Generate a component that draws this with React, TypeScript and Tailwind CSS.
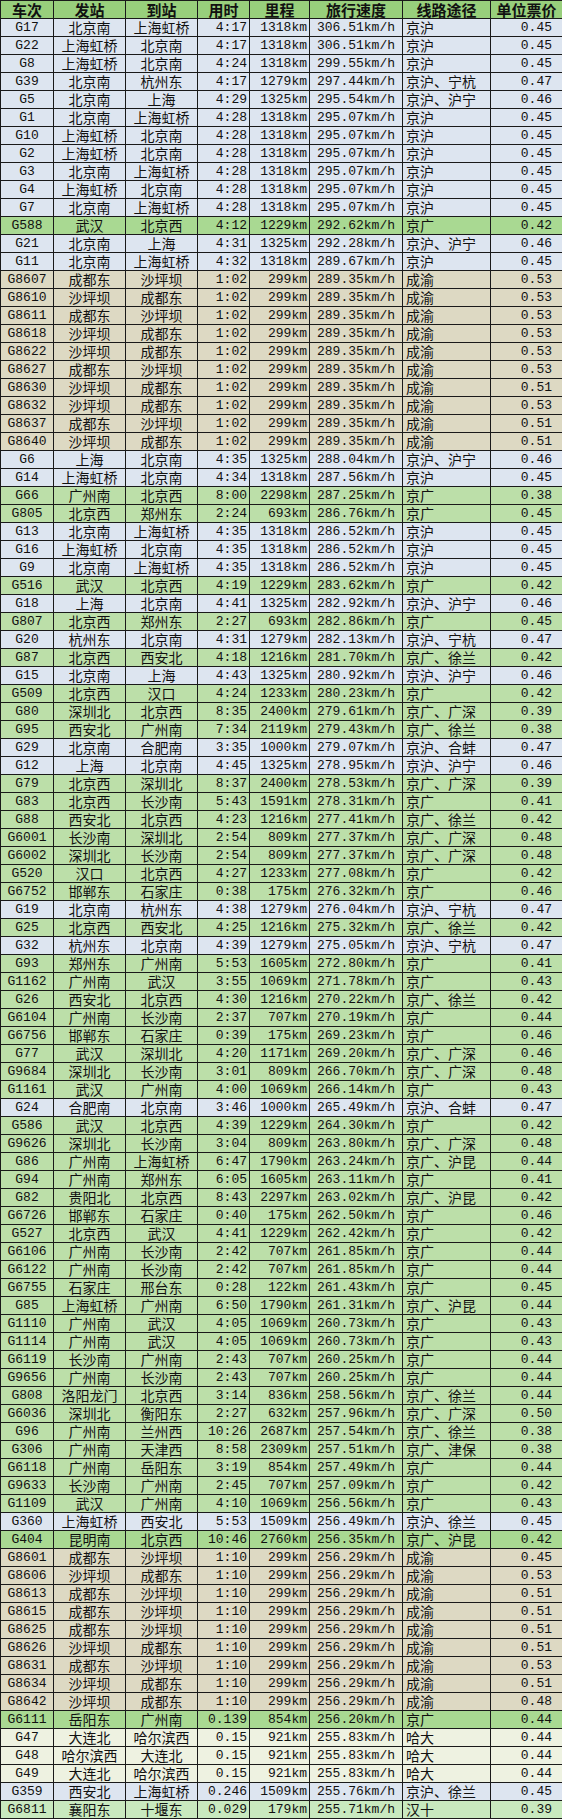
import React from 'react';

// speed ranking of G trains; last field = row colour
const RAW = `G17|北京南|上海虹桥|4:17|1318|306.51|京沪|0.45|b
G22|上海虹桥|北京南|4:17|1318|306.51|京沪|0.45|b
G8|上海虹桥|北京南|4:24|1318|299.55|京沪|0.45|b
G39|北京南|杭州东|4:17|1279|297.44|京沪、宁杭|0.47|b
G5|北京南|上海|4:29|1325|295.54|京沪、沪宁|0.46|b
G1|北京南|上海虹桥|4:28|1318|295.07|京沪|0.45|b
G10|上海虹桥|北京南|4:28|1318|295.07|京沪|0.45|b
G2|上海虹桥|北京南|4:28|1318|295.07|京沪|0.45|b
G3|北京南|上海虹桥|4:28|1318|295.07|京沪|0.45|b
G4|上海虹桥|北京南|4:28|1318|295.07|京沪|0.45|b
G7|北京南|上海虹桥|4:28|1318|295.07|京沪|0.45|b
G588|武汉|北京西|4:12|1229|292.62|京广|0.42|G
G21|北京南|上海|4:31|1325|292.28|京沪、沪宁|0.46|b
G11|北京南|上海虹桥|4:32|1318|289.67|京沪|0.45|b
G8607|成都东|沙坪坝|1:02|299|289.35|成渝|0.53|t
G8610|沙坪坝|成都东|1:02|299|289.35|成渝|0.53|t
G8611|成都东|沙坪坝|1:02|299|289.35|成渝|0.53|t
G8618|沙坪坝|成都东|1:02|299|289.35|成渝|0.53|t
G8622|沙坪坝|成都东|1:02|299|289.35|成渝|0.53|t
G8627|成都东|沙坪坝|1:02|299|289.35|成渝|0.53|t
G8630|沙坪坝|成都东|1:02|299|289.35|成渝|0.51|t
G8632|沙坪坝|成都东|1:02|299|289.35|成渝|0.53|t
G8637|成都东|沙坪坝|1:02|299|289.35|成渝|0.51|t
G8640|沙坪坝|成都东|1:02|299|289.35|成渝|0.51|t
G6|上海|北京南|4:35|1325|288.04|京沪、沪宁|0.46|b
G14|上海虹桥|北京南|4:34|1318|287.56|京沪|0.45|b
G66|广州南|北京西|8:00|2298|287.25|京广|0.38|g
G805|北京西|郑州东|2:24|693|286.76|京广|0.45|g
G13|北京南|上海虹桥|4:35|1318|286.52|京沪|0.45|b
G16|上海虹桥|北京南|4:35|1318|286.52|京沪|0.45|b
G9|北京南|上海虹桥|4:35|1318|286.52|京沪|0.45|b
G516|武汉|北京西|4:19|1229|283.62|京广|0.42|g
G18|上海|北京南|4:41|1325|282.92|京沪、沪宁|0.46|b
G807|北京西|郑州东|2:27|693|282.86|京广|0.45|g
G20|杭州东|北京南|4:31|1279|282.13|京沪、宁杭|0.47|b
G87|北京西|西安北|4:18|1216|281.70|京广、徐兰|0.42|g
G15|北京南|上海|4:43|1325|280.92|京沪、沪宁|0.46|b
G509|北京西|汉口|4:24|1233|280.23|京广|0.42|g
G80|深圳北|北京西|8:35|2400|279.61|京广、广深|0.39|g
G95|西安北|广州南|7:34|2119|279.43|京广、徐兰|0.38|g
G29|北京南|合肥南|3:35|1000|279.07|京沪、合蚌|0.47|b
G12|上海|北京南|4:45|1325|278.95|京沪、沪宁|0.46|b
G79|北京西|深圳北|8:37|2400|278.53|京广、广深|0.39|g
G83|北京西|长沙南|5:43|1591|278.31|京广|0.41|g
G88|西安北|北京西|4:23|1216|277.41|京广、徐兰|0.42|g
G6001|长沙南|深圳北|2:54|809|277.37|京广、广深|0.48|g
G6002|深圳北|长沙南|2:54|809|277.37|京广、广深|0.48|g
G520|汉口|北京西|4:27|1233|277.08|京广|0.42|g
G6752|邯郸东|石家庄|0:38|175|276.32|京广|0.46|g
G19|北京南|杭州东|4:38|1279|276.04|京沪、宁杭|0.47|b
G25|北京西|西安北|4:25|1216|275.32|京广、徐兰|0.42|g
G32|杭州东|北京南|4:39|1279|275.05|京沪、宁杭|0.47|b
G93|郑州东|广州南|5:53|1605|272.80|京广|0.41|g
G1162|广州南|武汉|3:55|1069|271.78|京广|0.43|g
G26|西安北|北京西|4:30|1216|270.22|京广、徐兰|0.42|g
G6104|广州南|长沙南|2:37|707|270.19|京广|0.44|g
G6756|邯郸东|石家庄|0:39|175|269.23|京广|0.46|g
G77|武汉|深圳北|4:20|1171|269.20|京广、广深|0.46|g
G9684|深圳北|长沙南|3:01|809|266.70|京广、广深|0.48|g
G1161|武汉|广州南|4:00|1069|266.14|京广|0.43|g
G24|合肥南|北京南|3:46|1000|265.49|京沪、合蚌|0.47|b
G586|武汉|北京西|4:39|1229|264.30|京广|0.42|g
G9626|深圳北|长沙南|3:04|809|263.80|京广、广深|0.48|g
G86|广州南|上海虹桥|6:47|1790|263.24|京广、沪昆|0.44|g
G94|广州南|郑州东|6:05|1605|263.11|京广|0.41|g
G82|贵阳北|北京西|8:43|2297|263.02|京广、沪昆|0.42|g
G6726|邯郸东|石家庄|0:40|175|262.50|京广|0.46|g
G527|北京西|武汉|4:41|1229|262.42|京广|0.42|g
G6106|广州南|长沙南|2:42|707|261.85|京广|0.44|g
G6122|广州南|长沙南|2:42|707|261.85|京广|0.44|g
G6755|石家庄|邢台东|0:28|122|261.43|京广|0.45|g
G85|上海虹桥|广州南|6:50|1790|261.31|京广、沪昆|0.44|g
G1110|广州南|武汉|4:05|1069|260.73|京广|0.43|g
G1114|广州南|武汉|4:05|1069|260.73|京广|0.43|g
G6119|长沙南|广州南|2:43|707|260.25|京广|0.44|g
G9656|广州南|长沙南|2:43|707|260.25|京广|0.44|g
G808|洛阳龙门|北京西|3:14|836|258.56|京广、徐兰|0.44|g
G6036|深圳北|衡阳东|2:27|632|257.96|京广、广深|0.50|g
G96|广州南|兰州西|10:26|2687|257.54|京广、徐兰|0.38|g
G306|广州南|天津西|8:58|2309|257.51|京广、津保|0.38|g
G6118|广州南|岳阳东|3:19|854|257.49|京广|0.44|g
G9633|长沙南|广州南|2:45|707|257.09|京广|0.42|g
G1109|武汉|广州南|4:10|1069|256.56|京广|0.43|g
G360|上海虹桥|西安北|5:53|1509|256.49|京沪、徐兰|0.45|b
G404|昆明南|北京西|10:46|2760|256.35|京广、沪昆|0.42|G
G8601|成都东|沙坪坝|1:10|299|256.29|成渝|0.45|t
G8606|沙坪坝|成都东|1:10|299|256.29|成渝|0.53|t
G8613|成都东|沙坪坝|1:10|299|256.29|成渝|0.51|t
G8615|成都东|沙坪坝|1:10|299|256.29|成渝|0.51|t
G8625|成都东|沙坪坝|1:10|299|256.29|成渝|0.51|t
G8626|沙坪坝|成都东|1:10|299|256.29|成渝|0.51|t
G8631|成都东|沙坪坝|1:10|299|256.29|成渝|0.53|t
G8634|沙坪坝|成都东|1:10|299|256.29|成渝|0.51|t
G8642|沙坪坝|成都东|1:10|299|256.29|成渝|0.48|t
G6111|岳阳东|广州南|0.139|854|256.20|京广|0.44|G
G47|大连北|哈尔滨西|0.15|921|255.83|哈大|0.44|c
G48|哈尔滨西|大连北|0.15|921|255.83|哈大|0.44|c
G49|大连北|哈尔滨西|0.15|921|255.83|哈大|0.44|c
G359|西安北|上海虹桥|0.246|1509|255.76|京沪、徐兰|0.45|b
G6811|襄阳东|十堰东|0.029|179|255.71|汉十|0.39|l`;

const ROWS = RAW.split('\n').map((l) => l.split('|'));

const ROW_BG: Record<string, string> = {
  b: 'bg-[#dde5f0]',
  g: 'bg-[#bcdfa9]',
  G: 'bg-[#a9d992]',
  t: 'bg-[#ddd9c3]',
  c: 'bg-[#eef2e1]',
  l: 'bg-[#c9e9bf]',
};

const HEAD = ['车次', '发站', '到站', '用时', '里程', '旅行速度', '线路途径', '单位票价'];

const cell = 'h-[18px] border border-[#1a1a1a] p-0 leading-[17px] whitespace-nowrap overflow-hidden';
const cjk = "font-['Noto_Sans_CJK_SC',sans-serif] text-[14px]";
const mono = "font-['Liberation_Mono','Noto_Sans_CJK_SC',monospace] text-[13px]";

export default function App() {
  return (
    <div className="w-[562px] bg-white text-[#111]">
      <table className="w-[562px] table-fixed border-collapse">
        <colgroup>
          <col className="w-[53px]" />
          <col className="w-[72px]" />
          <col className="w-[72px]" />
          <col className="w-[52px]" />
          <col className="w-[60px]" />
          <col className="w-[93px]" />
          <col className="w-[88px]" />
          <col className="w-[72px]" />
        </colgroup>
        <thead>
          <tr className="bg-[#98cf7c]">
            {HEAD.map((h) => (
              <th key={h} className={`${cell} ${cjk} text-[15px] font-bold text-center`}>
                {h}
              </th>
            ))}
          </tr>
        </thead>
        <tbody>
          {ROWS.map((r) => (
            <tr key={r[0]} className={ROW_BG[r[8]]}>
              <td className={`${cell} ${mono} text-center`}>{r[0]}</td>
              <td className={`${cell} ${cjk} text-center`}>{r[1]}</td>
              <td className={`${cell} ${cjk} text-center`}>{r[2]}</td>
              <td className={`${cell} ${mono} text-right pr-[2px]`}>{r[3]}</td>
              <td className={`${cell} ${mono} text-right pr-[2px]`}>{r[4]}km</td>
              <td className={`${cell} ${mono} text-center`}>{r[5]}km/h</td>
              <td className={`${cell} ${cjk} text-left pl-[3px]`}>{r[6]}</td>
              <td className={`${cell} ${mono} text-right pr-[10px]`}>{r[7]}</td>
            </tr>
          ))}
        </tbody>
      </table>
    </div>
  );
}
